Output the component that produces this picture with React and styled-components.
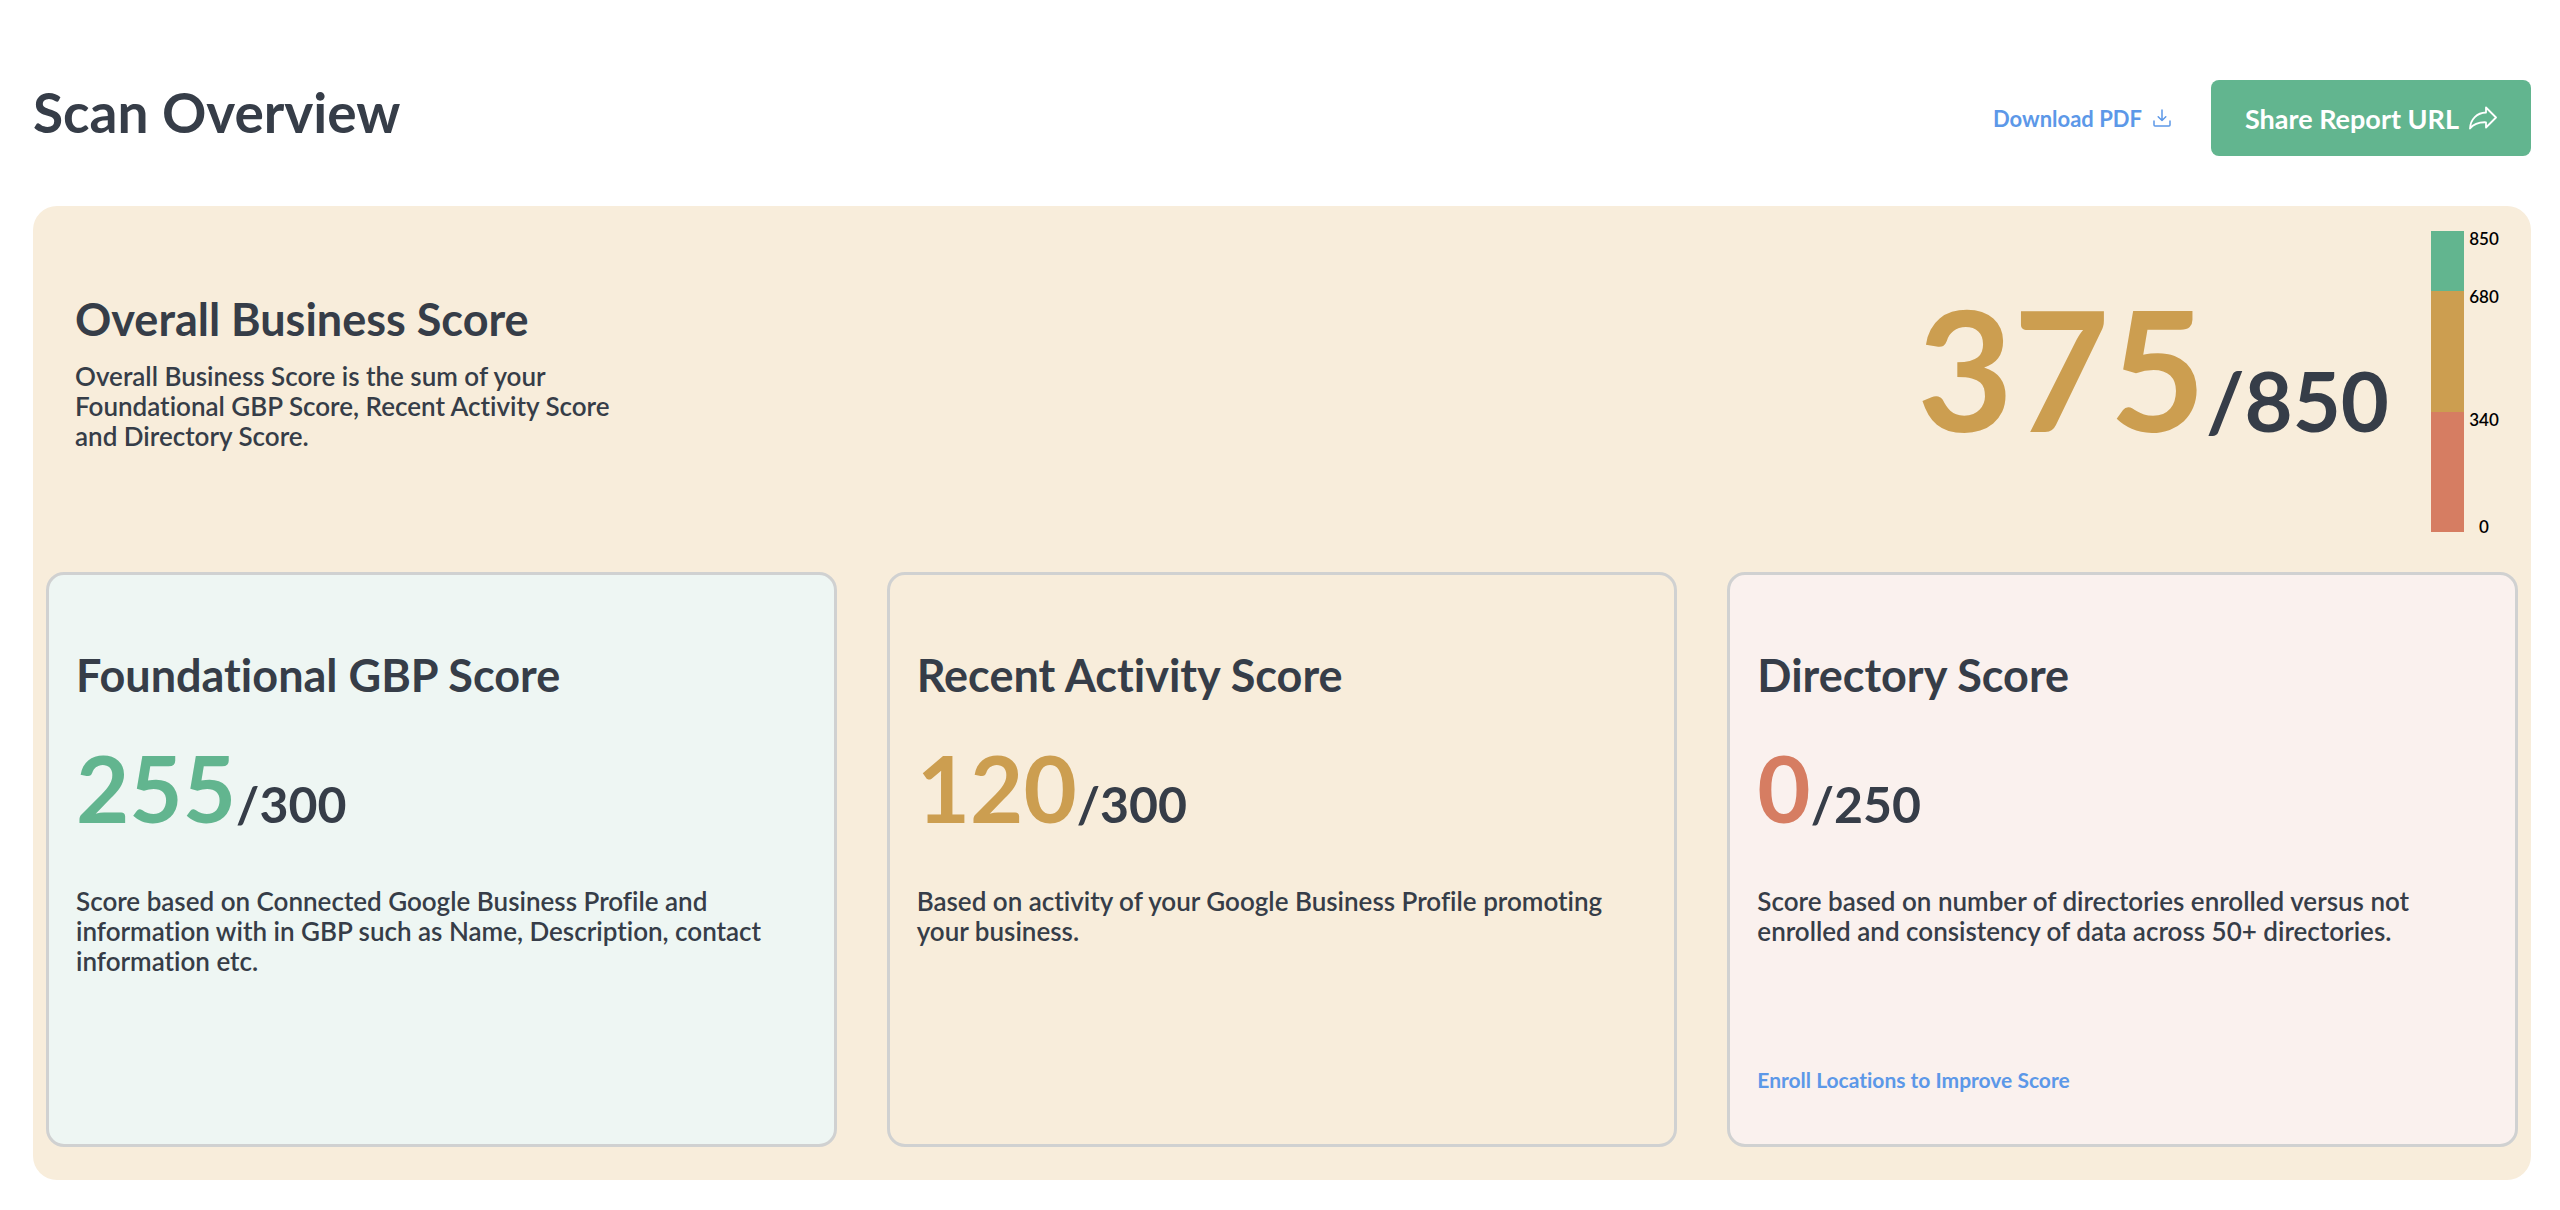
import React from 'react';
import styled, { createGlobalStyle } from 'styled-components';

const GlobalStyle = createGlobalStyle`
    * {
        box-sizing: border-box;
    }
    body {
        margin: 0;
        background: #ffffff;
        color: #363d48;
        font-family: Lato, "Open Sans", sans-serif;
        font-variant-ligatures: none;
    }
    h1, h2, p {
        margin: 0;
    }
`;

const colors = {
    good: '#62b58f',
    fair: '#cc9e50',
    poor: '#d67d62'
};

const Page = styled.main`
    padding: 80px 29px 30px 33px;
`;
const Header = styled.header`
    display: flex;
    justify-content: space-between;
    align-items: flex-start;
    margin-bottom: 50px;
`;
const Title = styled.h1`
    font-size: 55px;
    line-height: 64px;
    font-weight: 700;
`;
const Actions = styled.div`
    display: flex;
    align-items: center;
    gap: 40px;
`;
const Download = styled.a`
    display: flex;
    align-items: center;
    gap: 11px;
    color: #5c98e8;
    font-size: 22px;
    font-weight: 700;
    text-decoration: none;
`;
const Share = styled.button`
    display: flex;
    align-items: center;
    gap: 10px;
    height: 76px;
    padding: 0 34px;
    border: none;
    border-radius: 8px;
    background: ${colors.good};
    color: #ffffff;
    font-family: inherit;
    font-size: 27px;
    font-weight: 700;
`;
const Panel = styled.section`
    padding: 25px 13px 33px 13px;
    border-radius: 24px;
    background: #f8eddb;
`;
const Overall = styled.div`
    display: flex;
    justify-content: space-between;
    padding: 0 19px 0 29px;
    margin-bottom: 40px;
`;
const Summary = styled.div`
    width: 570px;
    padding-top: 62px;
`;
const Heading = styled.h2`
    font-size: 45px;
    line-height: 52px;
    font-weight: 700;
`;
const Text = styled.p`
    font-size: 26px;
    line-height: 30px;
    font-weight: 600;
`;
const Intro = styled(Text)`
    margin-top: 16px;
`;
const Result = styled.div`
    display: flex;
    gap: 42px;
`;
const Score = styled.p`
    color: ${props => props.color};
    font-size: ${props => (props.$large ? 166 : 92)}px;
    line-height: ${props => (props.$large ? 200 : 112)}px;
    font-weight: 700;
    white-space: nowrap;
`;
const OverallScore = styled(Score)`
    padding-top: 37px;
`;
const Total = styled.span`
    color: #363d48;
    font-size: ${props => (props.$large ? 83 : 50)}px;
`;
const Scale = styled.div`
    display: flex;
    gap: 5px;
    height: 301px;
`;
const Bar = styled.div`
    display: flex;
    flex-direction: column;
    width: 33px;
`;
const Segment = styled.div`
    flex: ${props => props.size};
    background: ${props => props.color};
`;
const Marks = styled.div`
    display: grid;
    grid-template-rows: 58px 123px 1fr 13px;
    width: 30px;
    color: #000000;
    font-size: 17px;
    line-height: 16px;
    font-weight: 600;
    text-align: center;
`;
const Cards = styled.div`
    display: grid;
    grid-template-columns: repeat(3, 1fr);
    gap: 50px;
`;
const Card = styled.article`
    display: flex;
    flex-direction: column;
    min-height: 575px;
    padding: 74px 27px 52px;
    border: 3px solid #d0d1d1;
    border-radius: 18px;
    background: ${props => props.$background};
`;
const CardScore = styled(Score)`
    margin: 31px 0 26px;
`;
const Enroll = styled.a`
    margin-top: auto;
    color: #5c98e8;
    font-size: 21px;
    line-height: 24px;
    font-weight: 700;
    text-decoration: none;
`;

const cards = [
    {
        title: 'Foundational GBP Score',
        score: 255,
        total: 300,
        color: colors.good,
        background: '#eef6f3',
        text: 'Score based on Connected Google Business Profile and information with in GBP such as Name, Description, contact information etc.'
    },
    {
        title: 'Recent Activity Score',
        score: 120,
        total: 300,
        color: colors.fair,
        background: '#f8eddb',
        text: 'Based on activity of your Google Business Profile promoting your business.'
    },
    {
        title: 'Directory Score',
        score: 0,
        total: 250,
        color: colors.poor,
        background: '#faf1ee',
        text: 'Score based on number of directories enrolled versus not enrolled and consistency of data across 50+ directories.',
        link: 'Enroll Locations to Improve Score'
    }
];

function DownloadIcon() {
    return (
        <svg width="18" height="18" viewBox="0 0 18 18" fill="none" stroke="currentColor" strokeWidth="1.5" strokeLinecap="round" strokeLinejoin="round" aria-hidden="true">
            <path d="M9 1v10.500M5.200 7.800 9 11.500l3.800-3.700M1 12v4q0 1 1 1h14q1 0 1-1v-4" />
        </svg>
    );
}

function ShareIcon() {
    return (
        <svg width="28" height="24" viewBox="0 0 28 24" fill="none" stroke="currentColor" strokeWidth="1.8" strokeLinejoin="round" aria-hidden="true">
            <path d="M17 1.500 27 11.500 17 21.500V16.300C9.500 16 5 17.500 1 22.500 1.500 13 8 6.800 17 6.500Z" />
        </svg>
    );
}

export default function App() {
    return (
        <>
            <GlobalStyle />
            <Page>
                <Header>
                    <Title>Scan Overview</Title>
                    <Actions>
                        <Download href="#download">Download PDF <DownloadIcon /></Download>
                        <Share type="button">Share Report URL <ShareIcon /></Share>
                    </Actions>
                </Header>
                <Panel>
                    <Overall>
                        <Summary>
                            <Heading>Overall Business Score</Heading>
                            <Intro>Overall Business Score is the sum of your Foundational GBP Score, Recent Activity Score and Directory Score.</Intro>
                        </Summary>
                        <Result>
                            <OverallScore $large color={colors.fair}>375<Total $large>/850</Total></OverallScore>
                            <Scale>
                                <Bar>
                                    <Segment size={1} color={colors.good} />
                                    <Segment size={2} color={colors.fair} />
                                    <Segment size={2} color={colors.poor} />
                                </Bar>
                                <Marks>
                                    <span>850</span>
                                    <span>680</span>
                                    <span>340</span>
                                    <span>0</span>
                                </Marks>
                            </Scale>
                        </Result>
                    </Overall>
                    <Cards>
                        {cards.map(card => (
                            <Card key={card.title} $background={card.background}>
                                <Heading>{card.title}</Heading>
                                <CardScore color={card.color}>{card.score}<Total>/{card.total}</Total></CardScore>
                                <Text>{card.text}</Text>
                                {card.link && <Enroll href="#enroll">{card.link}</Enroll>}
                            </Card>
                        ))}
                    </Cards>
                </Panel>
            </Page>
        </>
    );
}
